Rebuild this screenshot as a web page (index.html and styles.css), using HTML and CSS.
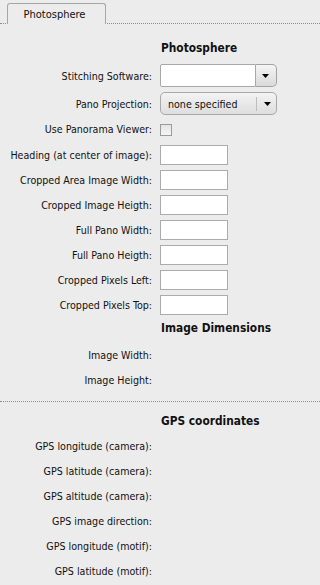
FILE: index.html
```html
<!DOCTYPE html>
<html>
<head>
<meta charset="utf-8">
<link rel="stylesheet" href="styles.css">
</head>
<body>
<div class="tabbar">
  <div class="tab">Photosphere</div>
</div>
<div class="form">
  <div class="row header"><span class="label"></span><span class="title">Photosphere</span></div>
  <div class="row row-combo1">
    <span class="label">Stitching Software:</span>
    <div class="combo-edit">
      <div class="combo-text"></div>
      <div class="combo-btn"><svg width="7" height="4" viewBox="0 0 7 4"><polygon points="0,0 7,0 3.5,4" fill="#000"/></svg></div>
    </div>
  </div>
  <div class="row row-combo2">
    <span class="label">Pano Projection:</span>
    <div class="combo-select">
      <span class="combo-value">none specified</span>
      <span class="combo-sep"></span>
      <span class="combo-arrow"><svg width="7" height="4" viewBox="0 0 7 4"><polygon points="0,0 7,0 3.5,4" fill="#000"/></svg></span>
    </div>
  </div>
  <div class="row row-check">
    <span class="label">Use Panorama Viewer:</span>
    <span class="checkbox"></span>
  </div>
  <div class="row"><span class="label">Heading (at center of image):</span><span class="field"></span></div>
  <div class="row"><span class="label">Cropped Area Image Width:</span><span class="field"></span></div>
  <div class="row"><span class="label">Cropped Image Heigth:</span><span class="field"></span></div>
  <div class="row"><span class="label">Full Pano Width:</span><span class="field"></span></div>
  <div class="row"><span class="label">Full Pano Heigth:</span><span class="field"></span></div>
  <div class="row"><span class="label">Cropped Pixels Left:</span><span class="field"></span></div>
  <div class="row"><span class="label">Cropped Pixels Top:</span><span class="field"></span></div>
  <div class="row header2"><span class="label"></span><span class="title">Image Dimensions</span></div>
  <div class="row"><span class="label">Image Width:</span></div>
  <div class="row"><span class="label">Image Height:</span></div>
  <div class="separator"></div>
  <div class="row header3"><span class="label"></span><span class="title">GPS coordinates</span></div>
  <div class="row"><span class="label">GPS longitude (camera):</span></div>
  <div class="row"><span class="label">GPS latitude (camera):</span></div>
  <div class="row"><span class="label">GPS altitude (camera):</span></div>
  <div class="row"><span class="label">GPS image direction:</span></div>
  <div class="row"><span class="label">GPS longitude (motif):</span></div>
  <div class="row"><span class="label">GPS latitude (motif):</span></div>
</div>
</body>
</html>
```
FILE: styles.css
```css
html, body {
  margin: 0;
  padding: 0;
  background: #ececec;
}
body {
  height: 585px;
  overflow: hidden;
  font-family: "DejaVu Sans Condensed", "DejaVu Sans", "Liberation Sans", sans-serif;
  font-size: 10.6px;
  color: #111;
}
.tabbar {
  height: 24px;
  box-sizing: border-box;
  display: flex;
  align-items: flex-end;
  padding-left: 7px;
  border-bottom: 1px dotted #8c8c8c;
}
.tab {
  width: 99px;
  height: 21px;
  box-sizing: border-box;
  margin-bottom: -1px;
  border: 1px solid #a6a6a6;
  border-bottom: none;
  border-radius: 3px 3px 0 0;
  background: #ececec;
  display: flex;
  align-items: center;
  justify-content: center;
  padding-right: 4px;
  padding-top: 1px;
  font-size: 11px;
}
.form {
  display: flex;
  flex-direction: column;
  padding-top: 12px;
}
.row {
  display: flex;
  align-items: center;
  height: 25px;
}
.label {
  width: 152px;
  flex: none;
  text-align: right;
  margin-right: 8px;
  white-space: nowrap;
}
.title {
  font-weight: bold;
  font-size: 11.8px;
  color: #111;
  padding-left: 1px;
}
.header { height: 23px; }
.row-combo1 { height: 33px; }
.row-combo2 { height: 23px; }
.row-check { height: 27px; }
.header2 { height: 25px; align-items: flex-start; padding-top: 4px; box-sizing: border-box; }
.header3 { height: 24px; }
.separator {
  margin-top: 9px;
  border-top: 1px dotted #8c8c8c;
  margin-bottom: 7px;
}
.field {
  width: 68px;
  height: 20px;
  box-sizing: border-box;
  border: 1px solid #ababab;
  background: #fff;
}
.checkbox {
  width: 12px;
  height: 12px;
  box-sizing: border-box;
  border: 1px solid #9a9a9a;
  background: linear-gradient(#e4e4e4, #f6f6f6);
  margin-top: 3px;
}
.combo-edit {
  display: flex;
  width: 117px;
  height: 23px;
}
.combo-text {
  width: 96px;
  height: 23px;
  box-sizing: border-box;
  border: 1px solid #a8a8a8;
  border-radius: 2px 0 0 2px;
  background: #fff;
}
.combo-btn {
  width: 21px;
  height: 23px;
  box-sizing: border-box;
  border: 1px solid #a2a2a2;
  border-left: none;
  border-radius: 0 5px 5px 0;
  background: linear-gradient(#f5f5f5, #dadada);
  display: flex;
  align-items: center;
  justify-content: center;
  padding-right: 1px;
}
.combo-select {
  display: flex;
  align-items: center;
  width: 117px;
  height: 23px;
  box-sizing: border-box;
  border: 1px solid #a8a8a8;
  border-radius: 5px;
  background: linear-gradient(#f3f3f3, #dedede);
}
.combo-value {
  width: 88px;
  padding-left: 7px;
  white-space: nowrap;
  overflow: hidden;
}
.combo-sep {
  width: 1px;
  height: 14px;
  background: #bdbdbd;
}
.combo-arrow {
  flex: 1;
  display: flex;
  justify-content: center;
  align-items: center;
  padding-left: 1px;
}
svg { display: block; }
```
